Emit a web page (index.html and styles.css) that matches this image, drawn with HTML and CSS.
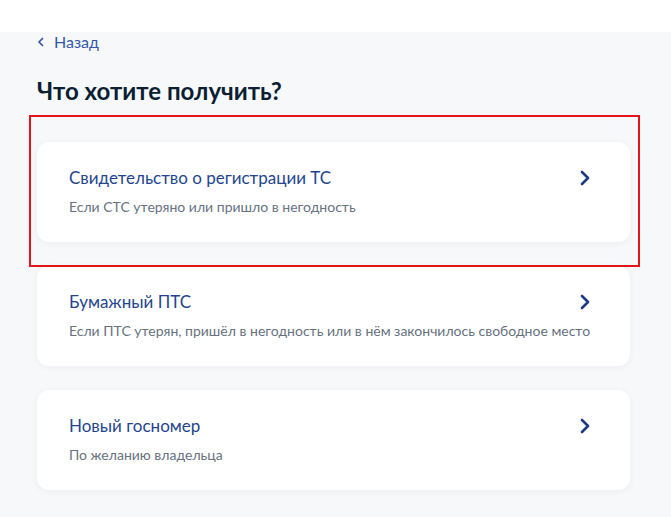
FILE: index.html
```html
<!DOCTYPE html>
<html lang="ru">
<head>
  <meta charset="UTF-8">
  <title>Что хотите получить?</title>
  <link rel="stylesheet" href="styles.css">
</head>
<body>
  <div class="top-bar"></div>

  <div class="page">
    <a class="back" href="#">
      <svg class="back-icon" width="8" height="10" viewBox="0 0 8 10"><path d="M5.5 1.5 L2 5 L5.5 8.5" fill="none" stroke="currentColor" stroke-width="1.7" stroke-linecap="round" stroke-linejoin="round"/></svg>
      <span>Назад</span>
    </a>

    <h1>Что хотите получить?</h1>

    <div class="options">
      <a class="card" href="#">
        <div class="card-head">
          <div class="card-title">Свидетельство о регистрации ТС</div>
          <svg class="chevron" width="10" height="16" viewBox="0 0 10 16"><path d="M2 2 L8 8 L2 14" fill="none" stroke="currentColor" stroke-width="2.6" stroke-linecap="round" stroke-linejoin="round"/></svg>
        </div>
        <div class="card-sub">Если СТС утеряно или пришло в негодность</div>
      </a>

      <a class="card" href="#">
        <div class="card-head">
          <div class="card-title">Бумажный ПТС</div>
          <svg class="chevron" width="10" height="16" viewBox="0 0 10 16"><path d="M2 2 L8 8 L2 14" fill="none" stroke="currentColor" stroke-width="2.6" stroke-linecap="round" stroke-linejoin="round"/></svg>
        </div>
        <div class="card-sub">Если ПТС утерян, пришёл в негодность или в нём закончилось свободное место</div>
      </a>

      <a class="card" href="#">
        <div class="card-head">
          <div class="card-title">Новый госномер</div>
          <svg class="chevron" width="10" height="16" viewBox="0 0 10 16"><path d="M2 2 L8 8 L2 14" fill="none" stroke="currentColor" stroke-width="2.6" stroke-linecap="round" stroke-linejoin="round"/></svg>
        </div>
        <div class="card-sub">По желанию владельца</div>
      </a>
    </div>

    <!-- рамка-выделение первого пункта -->
    <div class="highlight"></div>
  </div>
</body>
</html>
```

FILE: styles.css
```css
body {
  margin: 0;
  font-family: Lato, "Noto Sans", sans-serif;
  background-color: #f7f8fa;
  color: #0b1f33;
}

.top-bar {
  height: 32px;
  background-color: #fff;
}

.page {
  position: relative;
  padding: 0 41px 30px 37px;
}

.back {
  display: flex;
  align-items: center;
  gap: 9px;
  height: 20px;
  line-height: 20px;
  color: #3158a6;
  text-decoration: none;
  font-size: 16px;
}

.back-icon {
  display: block;
}

h1 {
  margin: 24px 0 0;
  font-size: 24px;
  font-weight: 700;
  line-height: 30px;
  color: #0b1f33;
}

.options {
  display: flex;
  flex-direction: column;
  gap: 24px;
  margin-top: 36px;
}

.card {
  display: block;
  height: 100px;
  box-sizing: border-box;
  padding: 25px 40px 0 32px;
  background-color: #fff;
  border-radius: 12px;
  box-shadow: 0 1px 6px rgba(30, 60, 110, 0.06);
  text-decoration: none;
}

.card-head {
  display: flex;
  align-items: center;
  justify-content: space-between;
}

.card-title {
  font-size: 17px;
  line-height: 22px;
  color: #23458f;
}

.card-sub {
  margin-top: 8px;
  font-size: 14px;
  line-height: 20px;
  color: #66727f;
  white-space: nowrap;
}

.chevron {
  display: block;
  color: #1d3a86;
}

.highlight {
  position: absolute;
  left: 29px;
  top: 83px;
  width: 611px;
  height: 152px;
  box-sizing: border-box;
  border: 2px solid #e3151b;
  pointer-events: none;
}
```
